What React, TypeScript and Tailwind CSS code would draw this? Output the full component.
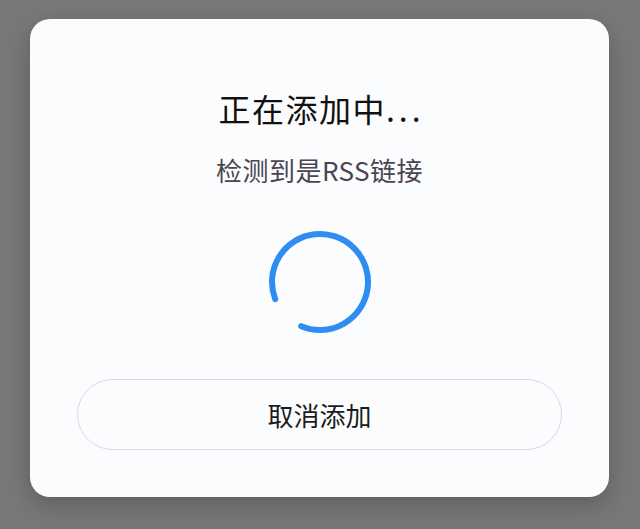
import React from "react";

export default function App() {
  return (
    <div className="w-[640px] h-[529px] bg-[#77787a] pt-[19px] pl-[30px] overflow-hidden" style={{ fontFamily: '"Noto Sans CJK SC", "Noto Sans", sans-serif' }}>
      <div className="w-[579px] h-[478px] bg-[#fbfcfe] rounded-[20px] shadow-[0_8px_24px_rgba(0,0,0,0.22)] flex flex-col items-center pt-[69px]">
        <div className="h-[40px] leading-[40px] text-[32px] font-normal text-[#111111] tracking-[1.5px] pl-[4px]">
          正在添加中<span className="tracking-[4px]">...</span>
        </div>
        <div className="mt-[26px] h-[32px] leading-[32px] text-[26px] font-normal text-[#4a4550] tracking-[0.5px]">检测到是RSS链接</div>
        <svg className="mt-[41px]" width="110" height="110" viewBox="0 0 110 110">
          <path d="M10.19 72.2 A48 48 0 1 1 36.25 99.18" fill="none" stroke="#2d8df0" strokeWidth="6" strokeLinecap="round" />
        </svg>
        <button className="mt-[42px] w-[485px] h-[71px] rounded-full border border-[#d8dadf] bg-[#fbfcfe] text-[26px] text-[#1c1c1c] flex items-center justify-center">
          取消添加
        </button>
      </div>
    </div>
  );
}
